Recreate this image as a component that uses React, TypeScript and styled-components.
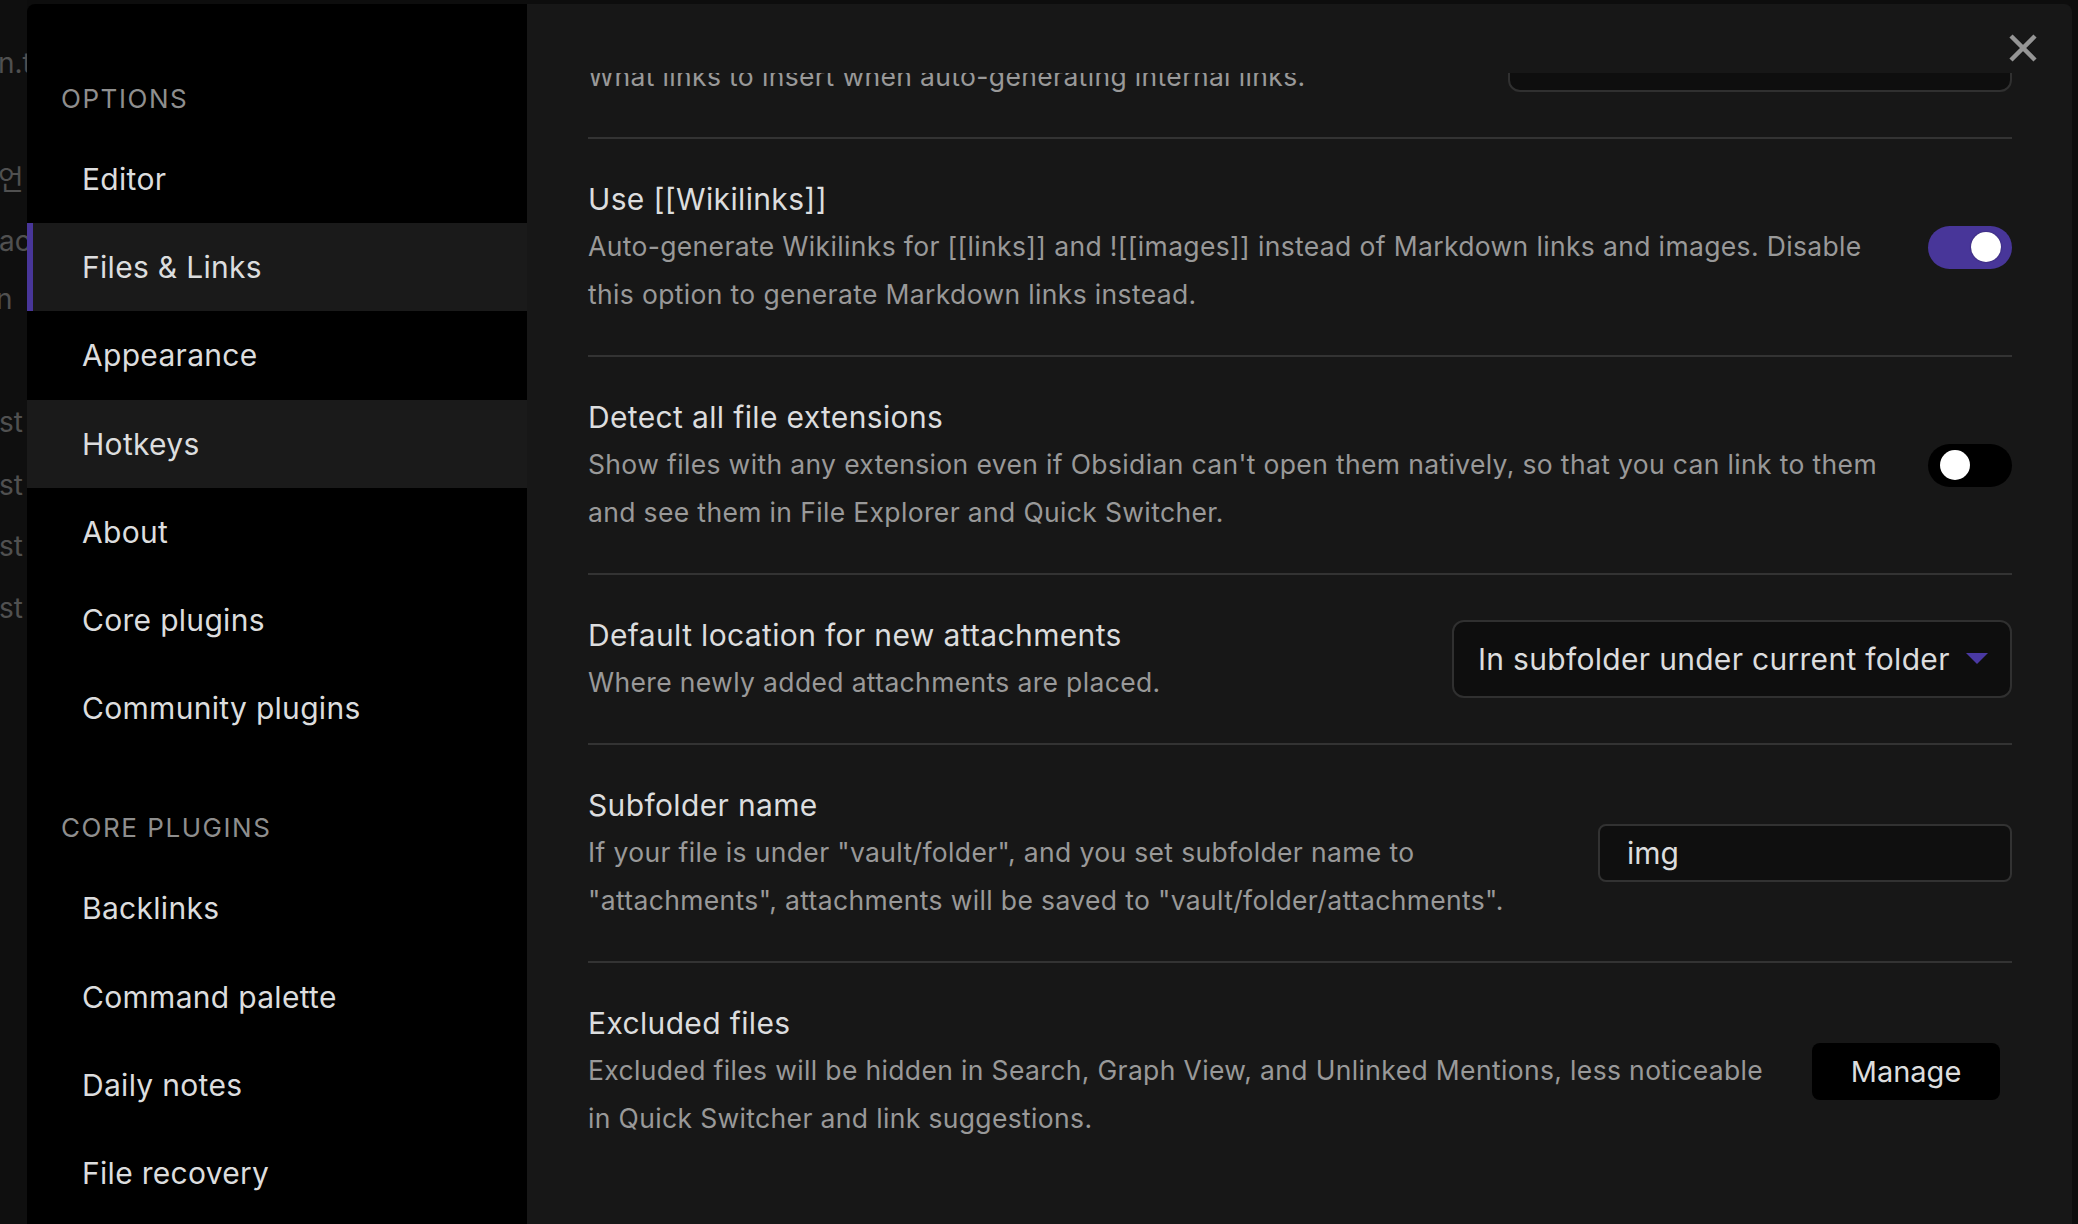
import React from "react";
import styled, { createGlobalStyle, css } from "styled-components";

const GlobalStyle = createGlobalStyle`
  html, body {
    margin: 0;
    padding: 0;
    background: #0d0d0d;
    overflow: hidden;
    font-family: "Inter", "Noto Sans CJK KR", sans-serif;
    -webkit-font-smoothing: antialiased;
  }
  * { box-sizing: border-box; }
`;

const Page = styled.div`
  display: flex;
  width: 2078px;
  height: 1224px;
  overflow: hidden;
  background: #0d0d0d;
`;

const Backdrop = styled.div`
  width: 27px;
  flex-shrink: 0;
  display: flex;
  flex-direction: column;
  overflow: hidden;
  background: #0f0f0f;
  padding-top: 46px;
`;

const BackdropLine = styled.div<{ $top: number; $shift: number }>`
  margin-top: ${(p) => p.$top}px;
  margin-left: ${(p) => p.$shift}px;
  white-space: nowrap;
  font-size: 28px;
  line-height: 34px;
  color: #505050;
`;

const Modal = styled.div`
  flex: 1;
  display: flex;
  margin-top: 4px;
  margin-right: 6px;
  height: 1240px;
  border-radius: 8px 8px 0 0;
  overflow: hidden;
`;

const Sidebar = styled.nav`
  width: 500px;
  flex-shrink: 0;
  background: #000;
  padding-top: 75px;
  display: flex;
  flex-direction: column;
`;

const SectionHeader = styled.div<{ $first?: boolean }>`
  height: 40px;
  line-height: 40px;
  margin: ${(p) => (p.$first ? "0" : "56px")} 0 16px;
  padding-left: 34px;
  font-size: 26px;
  letter-spacing: 1.55px;
  color: #8e8e8e;
  text-transform: uppercase;
`;

const NavItem = styled.div<{ $active?: boolean; $hover?: boolean }>`
  height: 88.2px;
  display: flex;
  align-items: center;
  padding-left: 49px;
  font-size: 30px;
  letter-spacing: 0.3px;
  color: #dcddde;
  border-left: 6px solid transparent;
  ${(p) =>
    (p.$active || p.$hover) &&
    css`
      background: #1a1a1a;
    `}
  ${(p) =>
    p.$active &&
    css`
      border-left-color: #483699;
    `}
`;

const Content = styled.section`
  flex: 1;
  position: relative;
  background: #171717;
  display: flex;
  flex-direction: column;
`;

const CloseButton = styled.button`
  position: absolute;
  top: 29px;
  right: 34px;
  width: 30px;
  height: 30px;
  padding: 0;
  border: none;
  background: transparent;
  display: flex;
  align-items: center;
  justify-content: center;
  cursor: pointer;
`;

const ScrollArea = styled.div`
  margin-top: 69px;
  flex: 1;
  overflow: hidden;
  padding: 0 60px 0 61px;
`;

const ScrollInner = styled.div`
  margin-top: -106px;
`;

const SettingRow = styled.div<{ $first?: boolean }>`
  display: flex;
  align-items: center;
  padding: 37px 0;
  border-top: 2px solid ${(p) => (p.$first ? "transparent" : "#333333")};
`;

const Info = styled.div`
  flex: 1;
  min-width: 0;
  margin-right: 24px;
`;

const Title = styled.div`
  font-size: 30px;
  letter-spacing: 0.35px;
  line-height: 46px;
  color: #dcddde;
`;

const Desc = styled.div`
  font-size: 26.5px;
  letter-spacing: 0.35px;
  line-height: 48px;
  color: #999999;
`;

const DescLine = styled.div`
  white-space: nowrap;
`;

const Control = styled.div`
  flex-shrink: 0;
  display: flex;
  align-items: center;
`;

const Dropdown = styled.div<{ $width: number }>`
  width: ${(p) => p.$width}px;
  height: 78px;
  border: 2px solid #303030;
  border-radius: 12px;
  background: #0e0e0e;
  display: flex;
  align-items: center;
  justify-content: space-between;
  padding: 0 22px 0 24px;
  font-size: 30px;
  letter-spacing: 0.3px;
  color: #dcddde;
`;

const TextInput = styled.div`
  width: 414px;
  height: 58px;
  border: 2px solid #323232;
  border-radius: 8px;
  background: #0f0f0f;
  display: flex;
  align-items: center;
  padding-left: 27px;
  font-size: 30px;
  color: #dcddde;
`;

const Button = styled.div`
  width: 188px;
  height: 57px;
  margin-right: 12px;
  border-radius: 8px;
  background: #000;
  display: flex;
  align-items: center;
  justify-content: center;
  font-size: 29px;
  color: #dcddde;
`;

const Toggle = styled.div<{ $on?: boolean }>`
  width: 84px;
  height: 43px;
  border-radius: 22px;
  background: ${(p) => (p.$on ? "#483699" : "#000")};
  display: flex;
  align-items: center;
  justify-content: ${(p) => (p.$on ? "flex-end" : "flex-start")};
  padding: 0 11px 0 12px;
`;

const Knob = styled.div`
  width: 30px;
  height: 30px;
  border-radius: 50%;
  background: #ffffff;
  box-shadow: 0 0 2px rgba(0, 0, 0, 0.4);
`;

const Caret = () => (
  <svg width="22" height="12" viewBox="0 0 22 12">
    <polygon points="0,0 22,0 11,11" fill="#4a39a3" />
  </svg>
);

const CloseIcon = () => (
  <svg width="30" height="30" viewBox="0 0 30 30">
    <path d="M3 3 L27 27 M27 3 L3 27" stroke="#959595" strokeWidth="4.5" />
  </svg>
);

type Setting = {
  title: string;
  desc: string[];
  control: React.ReactNode;
};

const settings: Setting[] = [
  {
    title: "New link format",
    desc: ["What links to insert when auto-generating internal links."],
    control: <Dropdown $width={504}>Shortest path when possible</Dropdown>,
  },
  {
    title: "Use [[Wikilinks]]",
    desc: [
      "Auto-generate Wikilinks for [[links]] and ![[images]] instead of Markdown links and images. Disable",
      "this option to generate Markdown links instead.",
    ],
    control: (
      <Toggle $on>
        <Knob />
      </Toggle>
    ),
  },
  {
    title: "Detect all file extensions",
    desc: [
      "Show files with any extension even if Obsidian can't open them natively, so that you can link to them",
      "and see them in File Explorer and Quick Switcher.",
    ],
    control: (
      <Toggle>
        <Knob />
      </Toggle>
    ),
  },
  {
    title: "Default location for new attachments",
    desc: ["Where newly added attachments are placed."],
    control: (
      <Dropdown $width={560}>
        <span>In subfolder under current folder</span>
        <Caret />
      </Dropdown>
    ),
  },
  {
    title: "Subfolder name",
    desc: [
      'If your file is under "vault/folder", and you set subfolder name to',
      '"attachments", attachments will be saved to "vault/folder/attachments".',
    ],
    control: <TextInput>img</TextInput>,
  },
  {
    title: "Excluded files",
    desc: [
      "Excluded files will be hidden in Search, Graph View, and Unlinked Mentions, less noticeable",
      "in Quick Switcher and link suggestions.",
    ],
    control: <Button>Manage</Button>,
  },
];

const optionItems = [
  "Editor",
  "Files & Links",
  "Appearance",
  "Hotkeys",
  "About",
  "Core plugins",
  "Community plugins",
];
const coreItems = ["Backlinks", "Command palette", "Daily notes", "File recovery"];

const backdropLines = [
  { text: "n.ti", top: 0, shift: -2 },
  { text: "언", top: 83, shift: -2 },
  { text: "ac", top: 27, shift: -1 },
  { text: "n", top: 24, shift: -4 },
  { text: "st", top: 89, shift: -1 },
  { text: "st", top: 29, shift: -1 },
  { text: "st", top: 27, shift: -1 },
  { text: "st", top: 28, shift: -1 },
];

export default function App() {
  return (
    <>
      <GlobalStyle />
      <Page>
        <Backdrop>
          {backdropLines.map((l, i) => (
            <BackdropLine key={i} $top={l.top} $shift={l.shift}>
              {l.text}
            </BackdropLine>
          ))}
        </Backdrop>
        <Modal>
          <Sidebar>
            <SectionHeader $first>Options</SectionHeader>
            {optionItems.map((n) => (
              <NavItem key={n} $active={n === "Files & Links"} $hover={n === "Hotkeys"}>
                {n}
              </NavItem>
            ))}
            <SectionHeader>Core plugins</SectionHeader>
            {coreItems.map((n) => (
              <NavItem key={n}>{n}</NavItem>
            ))}
          </Sidebar>
          <Content>
            <CloseButton aria-label="Close">
              <CloseIcon />
            </CloseButton>
            <ScrollArea>
              <ScrollInner>
                {settings.map((s, i) => (
                  <SettingRow key={s.title} $first={i === 0}>
                    <Info>
                      <Title>{s.title}</Title>
                      <Desc>
                        {s.desc.map((d) => (
                          <DescLine key={d}>{d}</DescLine>
                        ))}
                      </Desc>
                    </Info>
                    <Control>{s.control}</Control>
                  </SettingRow>
                ))}
              </ScrollInner>
            </ScrollArea>
          </Content>
        </Modal>
      </Page>
    </>
  );
}
